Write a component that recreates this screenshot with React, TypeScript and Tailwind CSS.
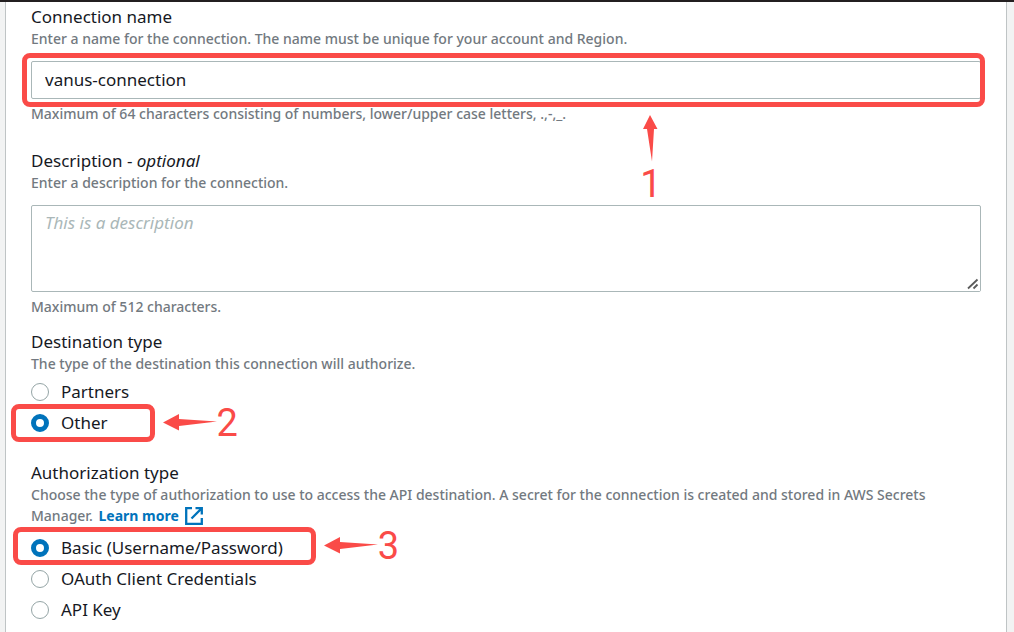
import { useState, type ReactNode } from "react";

function Marker({ className }: { className: string }) {
  return (
    <span
      aria-hidden="true"
      className={`pointer-events-none absolute rounded-lg border-[5px] border-[#fa4b48] ${className}`}
    />
  );
}

function StepNumber({ children }: { children: ReactNode }) {
  return <span className="font-['Roboto',sans-serif] text-[38px] leading-[42px]">{children}</span>;
}

function LeftArrow({ label }: { label: string }) {
  return (
    <span className="pointer-events-none absolute inset-y-0 left-full ml-2 flex items-center text-[#fa4b48]">
      <svg viewBox="0 0 54 20" className="h-5 w-[54px]" fill="currentColor" aria-hidden="true">
        <path d="M0 9.5 16 1V6L54 8.5 16 13V17.5Z" />
      </svg>
      <StepNumber>{label}</StepNumber>
    </span>
  );
}

function Heading({ children }: { children: ReactNode }) {
  return <span className="block text-[17px] leading-[22px] text-[#16191f]">{children}</span>;
}

function Hint({ children }: { children: ReactNode }) {
  return <p className="text-sm leading-[21px] font-medium text-[#727980]">{children}</p>;
}

type RadioProps = {
  name: string;
  label: string;
  checked: boolean;
  onSelect: () => void;
  children?: ReactNode;
};

function Radio({ name, label, checked, onSelect, children }: RadioProps) {
  return (
    <div className="relative w-fit">
      <label className="flex items-center gap-3 text-[17px] leading-[22px] text-[#16191f]">
        <input
          type="radio"
          name={name}
          checked={checked}
          onChange={onSelect}
          className="size-[18px] shrink-0 appearance-none rounded-full border border-[#95a5a6] bg-white checked:border-[5px] checked:border-[#0073bb]"
        />
        {label}
      </label>
      {children}
    </div>
  );
}

function ExternalIcon() {
  return (
    <svg
      viewBox="0 0 18 18"
      className="ml-1.5 inline-block size-[18px] align-[-4px]"
      fill="none"
      stroke="currentColor"
      strokeWidth="2.3"
      aria-hidden="true"
    >
      <path d="M7 1.2H1.2V16.8H16.8V11M10.5 1.2H16.8V7.5M16.8 1.2 6.5 11.5" />
    </svg>
  );
}

export default function App() {
  const [name, setName] = useState("vanus-connection");
  const [destination, setDestination] = useState("other");
  const [auth, setAuth] = useState("basic");

  return (
    <div className="min-h-screen border-t-2 border-[#231f20] bg-[#f2f3f3] pr-[7px] pl-[5px] font-['Noto_Sans','Open_Sans',sans-serif]">
      <main className="min-h-[630px] border-x border-[#bfc4c5] bg-white px-[25px] pt-1 pb-2">
        <section>
          <label htmlFor="connection-name">
            <Heading>Connection name</Heading>
          </label>
          <Hint>Enter a name for the connection. The name must be unique for your account and Region.</Hint>
          <div className="relative mt-3">
            <input
              id="connection-name"
              value={name}
              onChange={(e) => setName(e.target.value)}
              className="block h-[38px] w-full rounded-xs border border-[#aab7b8] bg-white px-[13px] pb-0.5 text-[17px] text-[#16191f] outline-none"
            />
            <Marker className="-top-2 -right-1 -bottom-2 -left-[9px]" />
            <span className="pointer-events-none absolute top-full left-[612px] mt-4 flex w-4 flex-col items-center text-[#fa4b48]">
              <svg viewBox="0 0 16 48" className="h-12 w-4" fill="currentColor" aria-hidden="true">
                <path d="M7 0 14.5 14H11L9 46.5 4 14H0Z" />
              </svg>
              <StepNumber>1</StepNumber>
            </span>
          </div>
          <div className="pt-1">
            <Hint>Maximum of 64 characters consisting of numbers, lower/upper case letters, .,-,_.</Hint>
          </div>
        </section>

        <section className="mt-[26px]">
          <label htmlFor="description">
            <Heading>
              Description - <em>optional</em>
            </Heading>
          </label>
          <Hint>Enter a description for the connection.</Hint>
          <div className="relative mt-3">
            <textarea
              id="description"
              placeholder="This is a description"
              className="block h-[87px] w-full resize-y rounded-xs border border-[#aab7b8] bg-white px-[13px] py-1.5 text-[17px] leading-[22px] text-[#16191f] outline-none placeholder:text-[#aab7b8] placeholder:italic"
            />
            <svg
              viewBox="0 0 14 14"
              className="pointer-events-none absolute right-px bottom-px size-3.5 bg-white"
              stroke="#5b5b5b"
              strokeWidth="1.8"
              aria-hidden="true"
            >
              <path d="M2 11.5 11.5 2.5M7.5 11.5 11.5 7.5" />
            </svg>
          </div>
          <div className="pt-1">
            <Hint>Maximum of 512 characters.</Hint>
          </div>
        </section>

        <fieldset className="mt-3.5">
          <legend>
            <Heading>Destination type</Heading>
          </legend>
          <Hint>The type of the destination this connection will authorize.</Hint>
          <div className="mt-[7px] flex flex-col gap-[9px]">
            <Radio name="destination" label="Partners" checked={destination === "partners"} onSelect={() => setDestination("partners")} />
            <Radio name="destination" label="Other" checked={destination === "other"} onSelect={() => setDestination("other")}>
              <span className="absolute -inset-y-2 -right-[47px] -left-5">
                <Marker className="inset-0" />
                <LeftArrow label="2" />
              </span>
            </Radio>
          </div>
        </fieldset>

        <fieldset className="mt-7">
          <legend>
            <Heading>Authorization type</Heading>
          </legend>
          <Hint>
            Choose the type of authorization to use to access the API destination. A secret for the connection is created
            and stored in AWS Secrets Manager.{" "}
            <a href="#learn-more" className="ml-0.5 font-bold whitespace-nowrap text-[#0073bb]">
              Learn more
              <ExternalIcon />
            </a>
          </Hint>
          <div className="mt-[11px] flex flex-col gap-[9px]">
            <Radio name="auth" label="Basic (Username/Password)" checked={auth === "basic"} onSelect={() => setAuth("basic")}>
              <span className="absolute -top-2.5 -right-[33px] -bottom-1.5 -left-[18px]">
                <Marker className="inset-0" />
                <LeftArrow label="3" />
              </span>
            </Radio>
            <Radio name="auth" label="OAuth Client Credentials" checked={auth === "oauth"} onSelect={() => setAuth("oauth")} />
            <Radio name="auth" label="API Key" checked={auth === "api-key"} onSelect={() => setAuth("api-key")} />
          </div>
        </fieldset>
      </main>
    </div>
  );
}
